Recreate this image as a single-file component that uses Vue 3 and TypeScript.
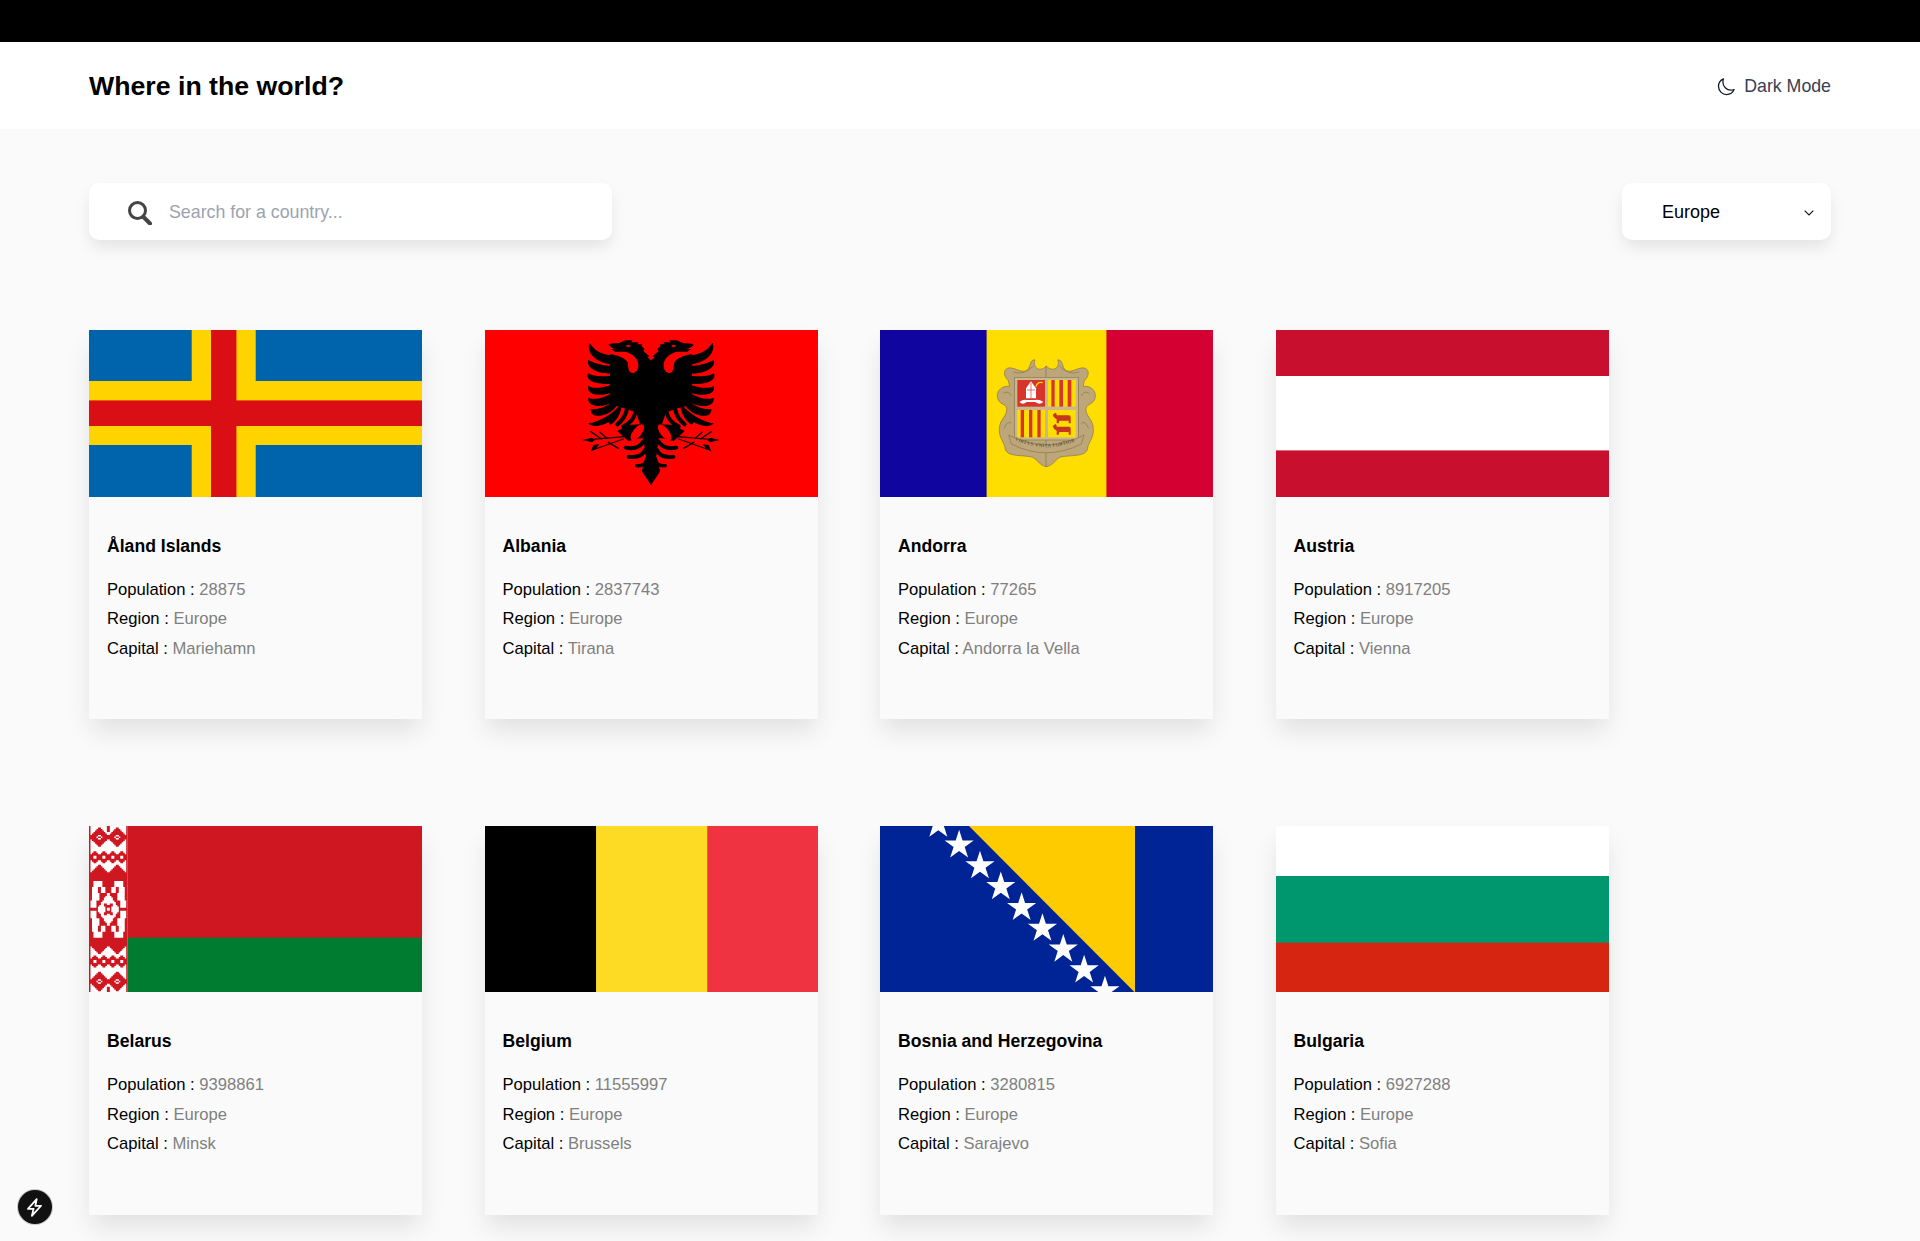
<script setup lang="ts">
interface Country {
  code: string
  name: string
  population: number
  capital: string
}

const countries: Country[] = [
  { code: 'ax', name: 'Åland Islands', population: 28875, capital: 'Mariehamn' },
  { code: 'al', name: 'Albania', population: 2837743, capital: 'Tirana' },
  { code: 'ad', name: 'Andorra', population: 77265, capital: 'Andorra la Vella' },
  { code: 'at', name: 'Austria', population: 8917205, capital: 'Vienna' },
  { code: 'by', name: 'Belarus', population: 9398861, capital: 'Minsk' },
  { code: 'be', name: 'Belgium', population: 11555997, capital: 'Brussels' },
  { code: 'ba', name: 'Bosnia and Herzegovina', population: 3280815, capital: 'Sarajevo' },
  { code: 'bg', name: 'Bulgaria', population: 6927288, capital: 'Sofia' },
]

// wing feathers of the Albanian eagle, left side, drawn in 3x coordinates
const feathers = [
  'M88 54C92 52 100 85 150 90L150 118C110 112 78 85 88 54Z',
  'M84 105C95 110 120 122 150 122L150 146C115 146 78 130 84 105Z',
  'M84 145C100 155 125 155 150 152L150 176C115 180 75 170 84 145Z',
  'M84 182C100 192 125 190 152 180L152 204C120 215 78 210 84 182Z',
  'M85 218C105 226 130 220 155 205L158 230C130 250 80 248 85 218Z',
  'M92 252C115 255 140 245 160 228L168 245C145 275 90 285 92 252Z',
  'M85 295C115 290 145 275 172 248L178 262C160 295 100 315 85 295Z',
]

function starPoints(cx: number, cy: number, r: number): string {
  const pts: string[] = []
  for (let i = 0; i < 10; i++) {
    const rad = i % 2 === 0 ? r : r * 0.382
    const a = (Math.PI / 5) * i - Math.PI / 2
    pts.push(`${(cx + rad * Math.cos(a)).toFixed(2)},${(cy + rad * Math.sin(a)).toFixed(2)}`)
  }
  return pts.join(' ')
}

const bosniaStars = Array.from({ length: 9 }, (_, i) =>
  starPoints(58.3 + i * 20.83, -1.7 + i * 20.83, 15.3),
)

// Belarus hoist ornament: 26 x 112 woven cells, symmetric on both axes
function ornamentRed(x: number, y: number): boolean {
  if (x < 1) return true
  const diamond = Math.abs(x - 7) + Math.abs(y - 7.5)
  if (diamond <= 7) return diamond >= 2.5 || diamond < 0.8
  if (x > 12 && y < 4) return true
  for (const cx of [4, 10]) {
    const ring = Math.abs(x - cx) + Math.abs(y - 21)
    if (ring <= 4) return ring >= 1.5
  }
  if (y < 26) return false
  const cd = Math.abs(x - 13) / 7.5 + Math.abs(y - 56) / 11.5
  if (cd <= 1) {
    const arm = Math.abs(Math.abs(x - 13) * 1.5 - Math.abs(y - 56))
    return cd > 0.15 && cd < 0.72 && arm < 1.8
  }
  if (y < 37) return y >= 26 + Math.abs(x - 7)
  if (y < 41) return !(x > 3 && x < 9)
  if (y < 45) return !(x > 2 && x < 11) || (x > 6 && x < 8)
  if (y < 50) return !(x > 2 && x < 7)
  if (y < 55) return !(x > 1 && x < 5)
  return true
}

const ornamentPath = (() => {
  const cell = 38.7 / 26
  let d = ''
  for (let r = 0; r < 112; r++) {
    const y = r < 56 ? r + 0.5 : 111 - r + 0.5
    for (let c = 0; c < 26; c++) {
      const x = c < 13 ? c + 0.5 : 25 - c + 0.5
      if (ornamentRed(x, y)) {
        d += `M${(c * cell).toFixed(2)} ${(r * cell).toFixed(2)}h${cell.toFixed(2)}v${cell.toFixed(2)}h-${cell.toFixed(2)}z`
      }
    }
  }
  return d
})()
</script>

<template>
  <div class="page">
    <div class="topbar"></div>
    <header class="header">
      <h1 class="title">Where in the world?</h1>
      <div class="mode">
        <svg class="moon" viewBox="0 0 24 24" fill="none" stroke="#111827" stroke-width="1.5" stroke-linejoin="round">
          <path d="M21.752 15.002A9.718 9.718 0 0118 15.75c-5.385 0-9.75-4.365-9.75-9.75 0-1.33.266-2.597.748-3.752A9.753 9.753 0 003 11.25C3 16.635 7.365 21 12.75 21a9.753 9.753 0 009.002-5.998z" />
        </svg>
        <span>Dark Mode</span>
      </div>
    </header>

    <main class="main">
      <div class="controls">
        <label class="search">
          <svg class="search-icon" viewBox="0 0 24 24" fill="none" stroke="#444" stroke-linecap="round">
            <circle cx="9.5" cy="9.5" r="8" stroke-width="3" />
            <path d="M16 16.5l6 6" stroke-width="4" />
          </svg>
          <input type="text" placeholder="Search for a country..." />
        </label>
        <div class="filter">
          <span>Europe</span>
          <svg class="chevron" viewBox="0 0 10 6" fill="none" stroke="#111" stroke-width="1.1">
            <path d="M.7.7L5 5l4.3-4.3" />
          </svg>
        </div>
      </div>

      <div class="grid">
        <article v-for="c in countries" :key="c.code" class="card">
          <svg class="flag" viewBox="0 0 333.3 166.6" preserveAspectRatio="none">
            <template v-if="c.code === 'ax'">
              <rect width="334" height="167" fill="#0064ad" />
              <rect x="102.7" width="64" height="167" fill="#ffd300" />
              <rect y="51" width="334" height="64" fill="#ffd300" />
              <rect x="122" width="25.4" height="167" fill="#da0e15" />
              <rect y="70.4" width="334" height="25.6" fill="#da0e15" />
            </template>

            <template v-else-if="c.code === 'al'">
              <rect width="334" height="167" fill="#f00" />
              <g transform="translate(75 -5) scale(.3333)">
                <g id="eagle-half">
                  <path v-for="(d, i) in feathers" :key="i" :d="d" fill="#000" />
                  <path d="M274 108L262 96 268 94 250 78 254 72 244 62 247 58 232 58 236 52 214 52 218 46 196 46 178 54 150 56 145 60 158 70 172 73 152 72 165 80 196 80C215 85 238 100 235 125 233 142 215 150 208 138 202 128 208 118 200 108 190 98 170 90 150 88L150 240 178 245 228 262 240 298 205 300 172 318 205 348 240 340 250 340 258 400 245 438 273 480 274 480Z" fill="#000" />
                  <ellipse cx="232" cy="322" rx="13" ry="29" transform="rotate(38 232 322)" fill="#f00" />
                  <ellipse cx="205" cy="63" rx="7" ry="3" fill="#f00" />
                  <g fill="none" stroke="#000" stroke-linecap="round">
                    <path d="M178 250Q170 280 152 292" stroke-width="12" />
                    <path d="M200 255Q195 280 172 298" stroke-width="12" />
                    <path d="M226 262Q220 290 190 305" stroke-width="12" />
                    <path d="M250 350Q235 375 197 368" stroke-width="12" />
                    <path d="M255 375Q245 400 206 395" stroke-width="12" />
                    <path d="M260 400Q258 425 230 422" stroke-width="10" />
                    <path d="M195 335L72 345" stroke-width="3.5" />
                    <path d="M190 342L95 376" stroke-width="3.5" />
                    <path d="M92 320L125 342" stroke-width="4" />
                    <path d="M120 322L140 340" stroke-width="4" />
                    <path d="M145 352L175 370" stroke-width="4" />
                  </g>
                  <path d="M70 345L95 338 105 345 95 352Z M92 380L100 360 118 358 108 370Z" fill="#000" />
                </g>
                <use href="#eagle-half" transform="translate(546 0) scale(-1 1)" />
              </g>
            </template>

            <template v-else-if="c.code === 'ad'">
              <rect width="107" height="167" fill="#10069f" />
              <rect x="106.6" width="120.4" height="167" fill="#fedd00" />
              <rect x="226.4" width="107" height="167" fill="#d50032" />
              <g transform="translate(100 10) scale(.3333)">
                <g id="crest-half" fill="#bda67a" stroke="#8a7447" stroke-width="2">
                  <path d="M200 78C188 90 172 92 165 78 158 60 172 58 160 60 150 62 152 82 140 92 120 100 100 78 82 85 68 92 72 110 85 122 88 132 88 140 88 140 70 135 50 150 52 170 55 195 78 190 80 205 82 230 60 235 58 265 56 295 75 310 75 325 78 350 120 345 150 350 170 352 175 375 198 380L200 380Z" />
                  <path d="M160 78Q130 108 100 96M70 160Q86 150 94 168M72 265Q84 240 94 250" fill="none" />
                </g>
                <use href="#crest-half" transform="translate(398 0) scale(-1 1)" />
                <rect x="104" y="112" width="191" height="188" fill="#cbb78e" stroke="#8a7447" stroke-width="2" />
                <path d="M86 285Q198 345 312 285L304 312Q198 365 94 312Z" fill="#bda67a" stroke="#8a7447" stroke-width="2" />
                <path id="motto-line" d="M100 298Q198 345 298 298" fill="none" />
                <text font-size="15" fill="#4a3c22" font-family="'Liberation Serif', serif" letter-spacing="1">
                  <textPath href="#motto-line" startOffset="4">VIRTVS VNITA FORTIOR</textPath>
                </text>

                <rect x="112" y="120" width="83" height="80" fill="#d8352a" />
                <path d="M138 175L138 145 153 124 168 145 168 175Z" fill="#fff" />
                <path d="M153 128V175M141 150H165" stroke="#d8352a" stroke-width="2" />
                <path d="M168 140Q172 124 188 128" fill="none" stroke="#fedd00" stroke-width="4" />
                <path d="M118 186Q130 178 140 180L166 180Q178 178 190 186 178 196 166 186L140 186Q128 196 118 186Z" fill="#fff" />

                <rect x="204" y="120" width="83" height="80" fill="#fedd00" />
                <rect x="112" y="210" width="83" height="82" fill="#fedd00" />
                <rect x="204" y="210" width="83" height="82" fill="#fedd00" />
                <g fill="#d8352a">
                  <rect x="214" y="120" width="10" height="80" />
                  <rect x="238" y="120" width="11" height="80" />
                  <rect x="263" y="120" width="11" height="80" />
                  <rect x="122" y="210" width="10" height="82" />
                  <rect x="147" y="210" width="10" height="82" />
                  <rect x="172" y="210" width="10" height="82" />
                </g>
                <g fill="#c8351f">
                  <path d="M230 226H268L272 230 272 250H266V242H238L236 250H230V238L222 232 218 224 226 218 230 222Z" />
                  <path d="M230 260H268L272 264 272 284H266V276H238L236 284H230V272L222 266 218 258 226 252 230 256Z" />
                </g>
              </g>
            </template>

            <template v-else-if="c.code === 'at'">
              <rect width="334" height="167" fill="#c8102e" />
              <rect y="46" width="334" height="74.4" fill="#fff" />
            </template>

            <template v-else-if="c.code === 'by'">
              <rect width="334" height="112" fill="#ce1720" />
              <rect y="111.6" width="334" height="56" fill="#007c30" />
              <rect width="38.7" height="167" fill="#fff" />
              <path :d="ornamentPath" fill="#ce1720" />
            </template>

            <template v-else-if="c.code === 'be'">
              <rect width="111.5" height="167" fill="#000" />
              <rect x="111.1" width="111.5" height="167" fill="#fdda24" />
              <rect x="222.2" width="112" height="167" fill="#ef3340" />
            </template>

            <template v-else-if="c.code === 'ba'">
              <rect width="334" height="167" fill="#002395" />
              <path d="M89 0H255V166.6Z" fill="#fecb00" />
              <polygon v-for="(p, i) in bosniaStars" :key="i" :points="p" fill="#fff" />
            </template>

            <template v-else>
              <rect width="334" height="50" fill="#fff" />
              <rect y="50" width="334" height="67" fill="#00966e" />
              <rect y="116.7" width="334" height="51" fill="#d62612" />
            </template>
          </svg>
          <div class="card-body">
            <h2 class="name">{{ c.name }}</h2>
            <p class="row">Population : <span class="val">{{ c.population }}</span></p>
            <p class="row">Region : <span class="val">Europe</span></p>
            <p class="row">Capital : <span class="val">{{ c.capital }}</span></p>
          </div>
        </article>
      </div>
    </main>

    <div class="dev-badge">
      <svg viewBox="0 0 24 24" fill="none" stroke="#fff" stroke-width="2" stroke-linejoin="round">
        <path d="M14.5 2.5L4.5 13.5H11L9 21.5 19.5 10H13Z" />
      </svg>
    </div>
  </div>
</template>

<style>
body {
  background: #fafafa;
}
</style>

<style scoped>
.page {
  position: relative;
  height: 1241px;
  overflow: hidden;
  background: #fafafa;
  color: #000;
  font-family: "Liberation Sans", Arial, sans-serif;
}

.topbar {
  height: 41.5px;
  background: #000;
}

.header {
  height: 87.5px;
  padding: 3px 89px 0;
  box-sizing: border-box;
  display: flex;
  align-items: center;
  justify-content: space-between;
  background: #fff;
}

.title {
  margin: 0;
  font-size: 26.7px;
  font-weight: 700;
}

.mode {
  display: flex;
  align-items: center;
  gap: 8px;
  font-size: 17.75px;
  color: #374151;
}

.moon {
  width: 20px;
  height: 20px;
}

.main {
  padding: 54px 89px 0;
}

.controls {
  display: flex;
  justify-content: space-between;
}

.search,
.filter {
  height: 57px;
  padding-top: 2px;
  display: flex;
  align-items: center;
  background: #fff;
  border-radius: 10px;
  box-shadow: 0 8px 16px -2px rgba(0, 0, 0, 0.1);
}

.search {
  width: 523px;
  padding-left: 39px;
  box-sizing: border-box;
}

.search-icon {
  width: 24px;
  height: 24px;
  flex-shrink: 0;
}

.search input {
  flex: 1;
  min-width: 0;
  margin-left: 17px;
  padding: 0;
  border: 0;
  outline: 0;
  background: none;
  font: 17.8px "Liberation Sans", Arial, sans-serif;
}

.search input::placeholder {
  color: #9ca3af;
}

.filter {
  width: 209px;
  padding: 2px 17px 0 40px;
  box-sizing: border-box;
  justify-content: space-between;
  font-size: 18px;
}

.chevron {
  width: 10px;
  height: 6px;
}

.grid {
  margin-top: 90px;
  display: flex;
  flex-wrap: wrap;
  column-gap: 62.2px;
  row-gap: 106.8px;
  width: 1600px;
}

.card {
  width: 333.33px;
  height: 389px;
  background: #fafafa;
  box-shadow: 0 14px 24px -2px rgba(0, 0, 0, 0.1);
}

.flag {
  display: block;
  width: 100%;
  height: 166.6px;
}

.card-body {
  padding: 37px 18px 0;
}

.name {
  margin: 0 0 17px;
  font-size: 17.6px;
  line-height: 24px;
  font-weight: 700;
}

.row {
  margin: 0;
  font-size: 16.6px;
  line-height: 29.5px;
}

.val {
  color: #808080;
}

.dev-badge {
  position: absolute;
  left: 17.5px;
  top: 1190px;
  width: 34px;
  height: 34px;
  border-radius: 50%;
  background: #111;
  box-shadow: 0 0 0 1px rgba(0, 0, 0, 0.2);
  display: flex;
  align-items: center;
  justify-content: center;
}

.dev-badge svg {
  width: 21px;
  height: 21px;
}
</style>
